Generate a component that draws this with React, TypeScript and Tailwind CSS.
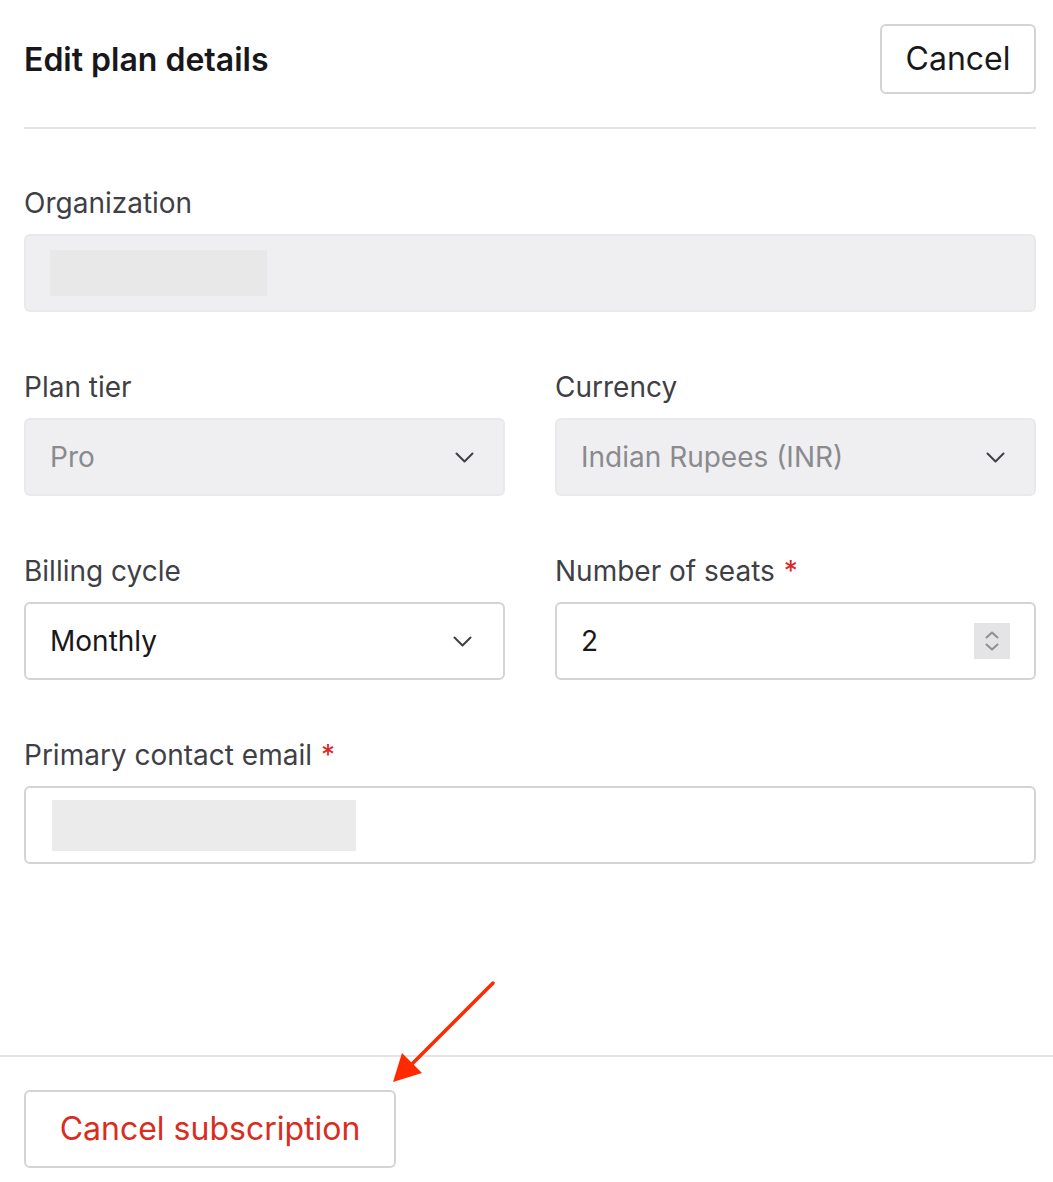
import type { ReactNode } from "react";

const font = { fontFamily: "Inter, 'Noto Sans', sans-serif" };

function Chevron() {
  return (
    <svg width="19" height="11" viewBox="0 0 19 11" fill="none" aria-hidden>
      <path d="M1.5 1.5 9.5 9.5 17.5 1.5" stroke="#3f3f46" strokeWidth="2" strokeLinecap="round" strokeLinejoin="round" />
    </svg>
  );
}

function Spinner() {
  return (
    <div className="flex h-[36px] w-[36px] flex-col items-center justify-center gap-[4px] bg-[#e4e4e7]">
      <svg width="14" height="8" viewBox="0 0 14 8" fill="none" aria-hidden>
        <path d="M1.5 6.5 7 1.5 12.5 6.5" stroke="#8e8e93" strokeWidth="2" strokeLinecap="round" strokeLinejoin="round" />
      </svg>
      <svg width="14" height="8" viewBox="0 0 14 8" fill="none" aria-hidden>
        <path d="M1.5 1.5 7 6.5 12.5 1.5" stroke="#8e8e93" strokeWidth="2" strokeLinecap="round" strokeLinejoin="round" />
      </svg>
    </div>
  );
}

function Field({ label, required, children }: { label: string; required?: boolean; children: ReactNode }) {
  return (
    <div className="flex flex-col gap-[11px]">
      <div className="flex h-[40px] items-center text-[28px] text-[#3f3f46]">
        {label}
        {required && <span className="ml-[9px] text-[#dc2626]">*</span>}
      </div>
      {children}
    </div>
  );
}

export default function App() {
  return (
    <div className="relative flex h-[1182px] w-full flex-col bg-white" style={font}>
      <div className="flex flex-1 flex-col pl-[24px] pr-[17px]">
        <div className="flex items-center justify-between border-b-2 border-[#e4e4e7] pt-[24px] pb-[33px]">
          <h1 className="pt-[2px] text-[32px] font-semibold text-[#18181b]">Edit plan details</h1>
          <button className="flex h-[70px] w-[156px] items-center justify-center rounded-[6px] border-2 border-[#d4d4d8] text-[32px] text-[#18181b]">
            Cancel
          </button>
        </div>

        <div className="flex flex-col gap-[55px] pt-[54px]">
          <Field label="Organization">
            <div className="flex h-[78px] items-center rounded-[6px] border-2 border-[#e9e9ec] bg-[#efeff1] pl-[24px]">
              <div className="h-[46px] w-[217px] bg-[#e8e8e8]" />
            </div>
          </Field>

          <div className="grid grid-cols-2 gap-[50px]">
            <Field label="Plan tier">
              <div className="flex h-[78px] items-center justify-between rounded-[6px] border-2 border-[#e9e9ec] bg-[#efeff1] pl-[24px] pr-[29px]">
                <span className="text-[28px] text-[#8a8a8f]">Pro</span>
                <Chevron />
              </div>
            </Field>
            <Field label="Currency">
              <div className="flex h-[78px] items-center justify-between rounded-[6px] border-2 border-[#e9e9ec] bg-[#efeff1] pl-[24px] pr-[29px]">
                <span className="text-[28px] text-[#8a8a8f]">Indian Rupees (INR)</span>
                <Chevron />
              </div>
            </Field>
          </div>

          <div className="grid grid-cols-2 gap-[50px]">
            <Field label="Billing cycle">
              <div className="flex h-[78px] items-center justify-between rounded-[6px] border-2 border-[#d4d4d8] bg-white pl-[24px] pr-[31px]">
                <span className="text-[28px] text-[#18181b]">Monthly</span>
                <Chevron />
              </div>
            </Field>
            <Field label="Number of seats" required>
              <div className="flex h-[78px] items-center justify-between rounded-[6px] border-2 border-[#d4d4d8] bg-white pl-[24px] pr-[24px]">
                <span className="text-[28px] text-[#18181b]">2</span>
                <Spinner />
              </div>
            </Field>
          </div>

          <Field label="Primary contact email" required>
            <div className="flex h-[78px] items-center rounded-[6px] border-2 border-[#d4d4d8] bg-white pl-[26px]">
              <div className="h-[51px] w-[304px] bg-[#ebebeb]" />
            </div>
          </Field>
        </div>
      </div>

      <div className="border-t-2 border-[#e4e4e7] pl-[24px] pt-[33px] pb-[14px]">
        <button className="flex h-[78px] w-[372px] items-center justify-center rounded-[6px] border-2 border-[#d4d4d8] text-[32px] text-[#d92d20]">
          Cancel subscription
        </button>
      </div>

      <svg className="absolute left-[385px] top-[976px]" width="116" height="114" viewBox="0 0 116 114" fill="none" aria-hidden>
        <path d="M108 7 26 89" stroke="#ff2a00" strokeWidth="3.5" strokeLinecap="round" />
        <path d="M8 106 17 77 37 97Z" fill="#ff2a00" />
      </svg>
    </div>
  );
}
